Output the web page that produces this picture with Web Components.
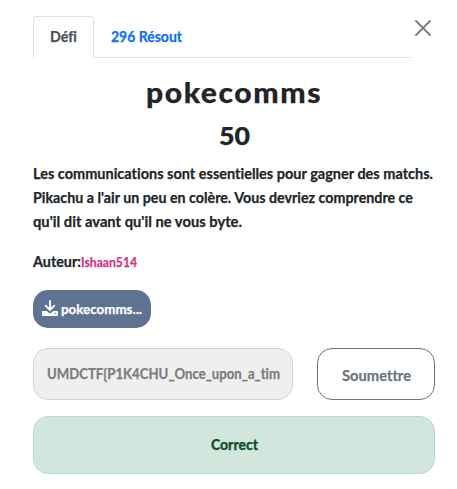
<!DOCTYPE html>
<html lang="fr">
<head>
<meta charset="utf-8">
<title>pokecomms</title>
<style>
body{margin:0;background:#fff;color:#212529;font-family:Lato,"Open Sans",sans-serif;font-weight:700;font-size:14.5px;font-variant-ligatures:none}
</style>
</head>
<body>
<challenge-dialog></challenge-dialog>
<script>
const define = (name, html, init) => customElements.define(name, class extends HTMLElement {
  connectedCallback() {
    if (this.shadowRoot) return;
    this.attachShadow({mode: 'open'}).innerHTML = html;
    if (init) init.call(this);
  }
});

// A single line of text fitted to the width given in its "w" attribute.
define('fit-text', `<style>
:host{display:block;white-space:nowrap;flex:none;-webkit-text-stroke:.25px currentColor}
span{display:inline-block;transform-origin:0 50%}
</style><span><slot></slot></span>`, function () {
  const w = +this.getAttribute('w'), s = this.shadowRoot.querySelector('span');
  this.style.width = w + 'px';
  s.style.transform = `scaleX(${w / s.getBoundingClientRect().width})`;
});

define('tab-item', `<style>
:host{display:block;box-sizing:border-box;height:42px;padding:8px 16px 0;border:1px solid transparent;border-radius:4px 4px 0 0;line-height:24px;color:#0d6efd;margin-bottom:-1px}
:host([active]){color:#495057;background:#fff;border-color:#dee2e6 #dee2e6 #fff}
</style><slot></slot>`);

define('tab-bar', `<style>
:host{display:flex;box-sizing:border-box;width:378px;height:42px;border-bottom:1px solid #dee2e6}
</style><slot></slot>`);

define('close-button', `<style>
:host{display:block;width:16px;height:16px}svg{display:block}
</style><svg width="16" height="16" viewBox="0 0 16 16" fill="none" stroke="#7f7f7f" stroke-width="1.9" stroke-linecap="round"><path d="M1 1 15 15M15 1 1 15"/></svg>`);

define('file-button', `<style>
:host{display:flex;box-sizing:border-box;width:118px;height:38px;border-radius:15px;background:#5e7391;color:#fff;padding-left:9px;align-items:center;gap:3px;font-size:13px}
svg{flex:none;margin-top:-2px}
</style><svg width="16" height="16" viewBox="0 0 16 16"><path d="M8 1V9.500M3.700 5.800 8 10 12.300 5.800" fill="none" stroke="#fff" stroke-width="1.900" stroke-linecap="round"/><path d="M1 11H4.700L8 13.800 11.300 11H15Q16 11 16 12V15Q16 16 15 16H1Q0 16 0 15V12Q0 11 1 11Z" fill="#fff"/><circle cx="13.500" cy="13.500" r=".8" fill="#5e7391"/></svg><slot></slot>`);

define('flag-field', `<style>
:host{display:flex;box-sizing:border-box;width:260px;height:52px;padding:0 0 1px 13px;align-items:center;border:1px solid #ced4da;border-radius:15px;background:#efefef;color:#7c7c7c}
</style><slot></slot>`);

define('submit-button', `<style>
:host{display:flex;box-sizing:border-box;width:118px;height:52px;align-items:center;justify-content:center;border:1px solid #6c757d;border-radius:15px;color:#6c757d;padding:2px 0 0 1px}
</style><slot></slot>`);

define('result-alert', `<style>
:host{display:flex;box-sizing:border-box;height:58px;align-items:center;justify-content:center;border:1px solid #badbcc;border-radius:15px;background:#d1e7dd;color:#0f5132;font-weight:900;padding-bottom:1px}
</style><slot></slot>`);

define('challenge-dialog', `<style>
:host{display:block;box-sizing:border-box;width:457px;height:489px;padding:16px 22px 0 33px}
header{display:flex;justify-content:space-between;height:42px}
close-button{margin:4px 4px 0 0}
h1,h2,p{margin:0;font-weight:inherit;font-size:inherit}
h1,h2{display:flex;justify-content:center;font-weight:900}
h1{height:34px;line-height:34px;font-size:29px;margin-top:17px;letter-spacing:1.5px}
h2{height:32px;line-height:32px;font-size:25px;margin-top:10px}
.text{margin-top:11px;line-height:24px}
.author{display:flex;margin-top:16px;line-height:24px}
.author .name{color:#d63384;font-size:13px}
file-button{margin-top:16px}
.answer{display:flex;justify-content:space-between;margin:20px 0 16px}
</style>
<header><tab-bar><tab-item active><fit-text w="27">Défi</fit-text></tab-item><tab-item><fit-text w="71">296 Résout</fit-text></tab-item></tab-bar><close-button></close-button></header>
<h1><fit-text w="176">pokecomms</fit-text></h1>
<h2><fit-text w="31">50</fit-text></h2>
<p class="text"><fit-text w="400">Les communications sont essentielles pour gagner des matchs.</fit-text><fit-text w="380">Pikachu a l'air un peu en colère. Vous devriez comprendre ce</fit-text><fit-text w="209">qu'il dit avant qu'il ne vous byte.</fit-text></p>
<p class="author"><fit-text w="48">Auteur:</fit-text><fit-text class="name" w="56">Ishaan514</fit-text></p>
<file-button><fit-text w="81">pokecomms...</fit-text></file-button>
<div class="answer"><flag-field><fit-text w="233">UMDCTF{P1K4CHU_Once_upon_a_tim</fit-text></flag-field><submit-button><fit-text w="69">Soumettre</fit-text></submit-button></div>
<result-alert><fit-text w="47">Correct</fit-text></result-alert>`);
</script>
</body>
</html>
